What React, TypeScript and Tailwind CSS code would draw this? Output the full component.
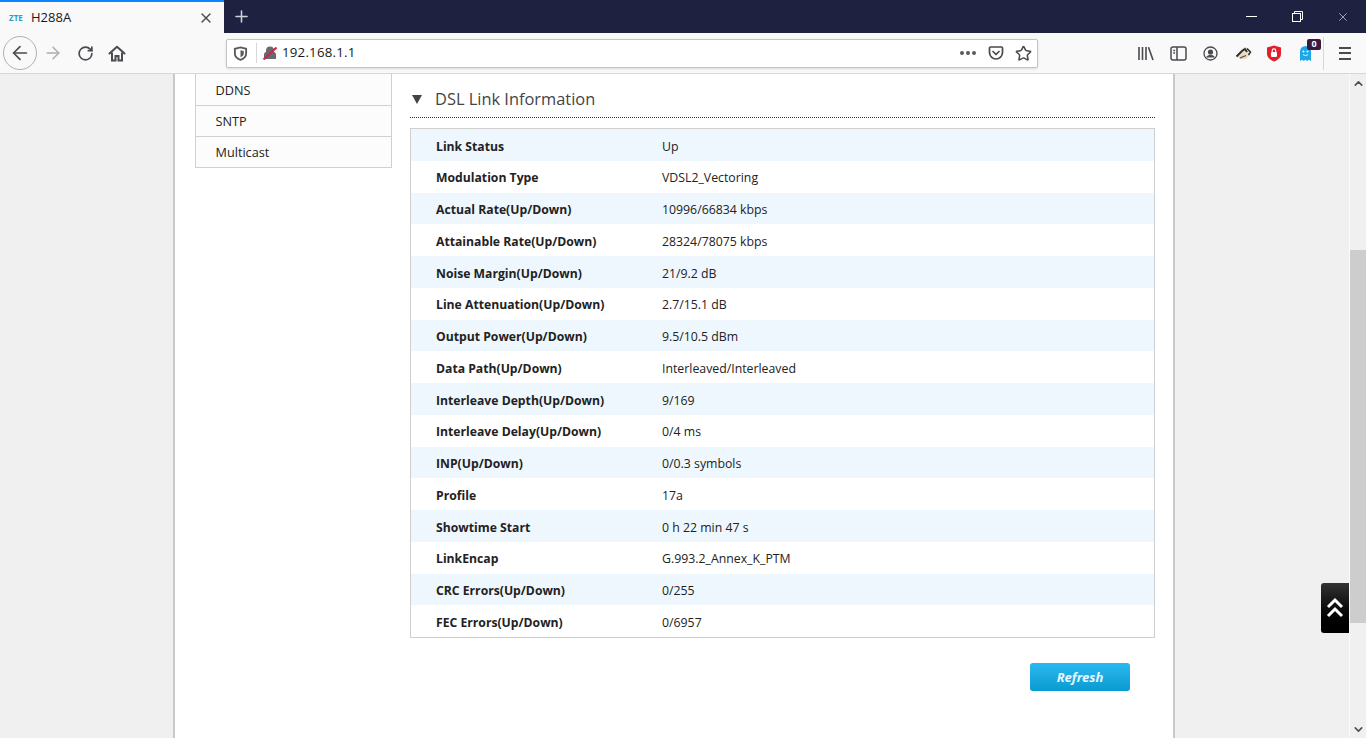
import * as React from "react";
import { ArrowLeft, ArrowRight, ChevronDown, ChevronUp, Plus, RotateCw, Star, X } from "lucide-react";

const rows: [string, string][] = [
  ["Link Status", "Up"],
  ["Modulation Type", "VDSL2_Vectoring"],
  ["Actual Rate(Up/Down)", "10996/66834 kbps"],
  ["Attainable Rate(Up/Down)", "28324/78075 kbps"],
  ["Noise Margin(Up/Down)", "21/9.2 dB"],
  ["Line Attenuation(Up/Down)", "2.7/15.1 dB"],
  ["Output Power(Up/Down)", "9.5/10.5 dBm"],
  ["Data Path(Up/Down)", "Interleaved/Interleaved"],
  ["Interleave Depth(Up/Down)", "9/169"],
  ["Interleave Delay(Up/Down)", "0/4 ms"],
  ["INP(Up/Down)", "0/0.3 symbols"],
  ["Profile", "17a"],
  ["Showtime Start", "0 h 22 min 47 s"],
  ["LinkEncap", "G.993.2_Annex_K_PTM"],
  ["CRC Errors(Up/Down)", "0/255"],
  ["FEC Errors(Up/Down)", "0/6957"],
];

const TabBar = () => (
  <div className="flex h-[33px] bg-[#1e2240] text-white">
    <div className="flex w-[224px] items-center border-t-2 border-[#0a84ff] bg-[#f9f9fa] pl-[9px] pr-[10px] text-[#18191a]">
      <span className="w-[22px] text-[8px] font-bold text-[#2a9fc9]">ZTE</span>
      <span className="flex-1 text-[13px]">H288A</span>
      <X size={16} strokeWidth={2} className="text-[#4a4a4f]" />
    </div>
    <div className="flex w-[34px] items-center justify-center">
      <Plus size={19} strokeWidth={2} className="text-[#d0d1d8]" />
    </div>
    <div className="flex-1" />
    <div className="flex items-center">
      <div className="flex w-[46px] justify-center">
        <div className="h-px w-[11px] bg-white" />
      </div>
      <div className="flex w-[46px] justify-center">
        <svg width="11" height="11" viewBox="0 0 11 11" fill="none" stroke="#fff" strokeWidth="1">
          <rect x="0.5" y="2.5" width="8" height="8" />
          <path d="M2.5 2.5v-2h8v8h-2" />
        </svg>
      </div>
      <div className="flex w-[46px] justify-center">
        <X size={14} strokeWidth={1} />
      </div>
    </div>
  </div>
);

const Toolbar = () => (
  <div className="flex h-[41px] items-center border-b border-[#d7d7db] bg-[#f9f9fa] text-[#4a4a4f]">
    <div className="ml-[3px] flex h-[34px] w-[34px] items-center justify-center rounded-full border border-[#b1b1b3]">
      <ArrowLeft size={22} strokeWidth={1.8} />
    </div>
    <ArrowRight size={20} strokeWidth={1.8} className="ml-[6px] text-[#adadb0]" />
    <RotateCw size={17} strokeWidth={2.4} className="ml-[14px]" />
    <svg width="18" height="17" viewBox="0 0 18 17" className="ml-[14px]" fill="none" stroke="#4a4a4f" strokeWidth="2">
      <path d="M1.500 8.500 9 1.800l7.500 6.700" strokeLinejoin="round" strokeLinecap="round" />
      <path d="M4 7.500V15.500h3.500V11h3v4.500H14V7.500" />
    </svg>
    <div className="ml-[100px] flex h-[29px] w-[812px] items-center rounded-[2px] border border-[#c4c4c6] bg-white shadow-sm">
      <svg width="15" height="15" viewBox="0 0 16 16" className="ml-[6px]" fill="none" stroke="#5b5b5f" strokeWidth="2">
        <path d="M8 1.500 14 3v5c0 3.500-2.600 5.600-6 6.700C4.600 13.600 2 11.500 2 8V3z" />
        <path d="M8 4.500 11.500 5.300V8c0 1.900-1.500 3.200-3.500 3.900z" fill="#5b5b5f" stroke="none" />
      </svg>
      <div className="ml-[8px] h-[20px] w-px bg-[#d7d7db]" />
      <svg width="16" height="16" viewBox="0 0 16 16" className="ml-[5px]">
        <path d="M2 14V9.500C2 8 3 7 4 7V5.500a4 4 0 0 1 8 0V7c1 0 2 1 2 2.500V14z" fill="#6a6a6e" />
        <path d="M1.500 14.500 14.500 2.500" stroke="#c8284f" strokeWidth="2.200" />
      </svg>
      <span className="ml-[4px] flex-1 text-[13.300px] tracking-[0.2px] text-[#18191a]">192.168.1.1</span>
      <div className="flex gap-[2px]">
        <div className="h-[4px] w-[4px] rounded-full bg-[#5b5b5f]" />
        <div className="h-[4px] w-[4px] rounded-full bg-[#5b5b5f]" />
        <div className="h-[4px] w-[4px] rounded-full bg-[#5b5b5f]" />
      </div>
      <svg width="16" height="16" viewBox="0 0 16 16" className="ml-[12px]" fill="none" stroke="#4a4a4f" strokeWidth="1.700">
        <path d="M2.500 2h11c.6 0 1 .4 1 1v4.500c0 3.600-3 6.500-6.500 6.500S1.500 11.100 1.500 7.500V3c0-.6.400-1 1-1z" />
        <path d="M5 6.500 8 9.500l3-3" strokeLinecap="round" strokeLinejoin="round" />
      </svg>
      <Star size={17} strokeWidth={2.2} className="ml-[11px] mr-[5px]" />
    </div>
    <div className="ml-[100px] flex items-center">
      <svg width="16" height="15" viewBox="0 0 16 15" fill="none" stroke="#4a4a4f" strokeWidth="1.600">
        <path d="M1 1v13M4.500 1v13M8 1v13M10.500 1.200 15 14" />
      </svg>
      <svg width="17" height="15" viewBox="0 0 17 15" className="ml-[16px]" fill="none" stroke="#4a4a4f" strokeWidth="1.500">
        <rect x="1" y="1" width="15" height="13" rx="2" />
        <path d="M7 1v13M3.300 4.500h1.800M3.300 7h1.800" />
      </svg>
      <svg width="15" height="15" viewBox="0 0 15 15" className="ml-[16px]" fill="none" stroke="#4a4a4f" strokeWidth="1.300">
        <circle cx="7.500" cy="7.500" r="6.500" />
        <circle cx="7.500" cy="6" r="2.600" fill="#4a4a4f" stroke="none" />
        <path d="M3 11.500c1-2 2.600-2.800 4.500-2.800s3.500.8 4.500 2.800z" fill="#4a4a4f" stroke="none" />
      </svg>
      <svg width="17" height="14" viewBox="0 0 17 14" className="ml-[17px]">
        <path d="M1 10 6 4l3-3 4 1 3 3-1 4-4 4H5z" fill="#e6dcc8" />
        <path d="M1.500 10.500 7 5l3-2 2 3" stroke="#2c2c2c" strokeWidth="1.800" fill="none" />
        <path d="M12 2.500 15.500 6l-2 3" stroke="#2c2c2c" strokeWidth="1.400" fill="none" />
        <path d="M5 12 11 9.500" stroke="#5b4a32" strokeWidth="1.300" />
      </svg>
      <svg width="16" height="17" viewBox="0 0 16 17" className="ml-[14px]">
        <path d="M8 .5 15 2.500V9c0 3.500-3.200 6-7 7.500C4.200 15 1 12.500 1 9V2.500z" fill="#e0202b" />
        <rect x="5" y="7" width="6" height="5" rx="1" fill="#fff" />
        <path d="M6.200 7V5.700a1.800 1.800 0 0 1 3.600 0V7" fill="none" stroke="#fff" strokeWidth="1.100" />
      </svg>
      <div className="relative ml-[17px] h-[17px] w-[13px]">
        <svg width="13" height="17" viewBox="0 0 13 17">
          <path d="M1 6.500a5.500 5.500 0 0 1 11 0V16l-2-1.300L8.200 16l-1.700-1.300L4.800 16 3 14.700 1 16z" fill="#1ea7e8" />
          <circle cx="4.500" cy="6.500" r="1" fill="#fff" />
          <circle cx="8.500" cy="6.500" r="1" fill="#fff" />
          <path d="M4 9.500c1.500 1.300 3.500 1.300 5 0" fill="none" stroke="#fff" strokeWidth="0.900" />
        </svg>
        <span className="absolute left-[8px] top-[-6px] flex h-[11px] w-[14px] items-center justify-center rounded-[2px] bg-[#3a1a3f] text-[9px] font-bold text-white">0</span>
      </div>
      <div className="ml-[11px] h-[33px] w-px bg-[#d7d7db]" />
      <div className="ml-[15px] flex flex-col gap-[3.500px]">
        <div className="h-[2px] w-[12px] bg-[#4a4a4f]" />
        <div className="h-[2px] w-[12px] bg-[#4a4a4f]" />
        <div className="h-[2px] w-[12px] bg-[#4a4a4f]" />
      </div>
    </div>
  </div>
);

const Sidebar = () => (
  <div className="w-[197px] shrink-0 border-x border-b border-[#d0d0d0] bg-[#fcfcfc] text-[12.700px] text-[#222]">
    <div className="flex h-[32px] items-center border-b border-[#d0d0d0] pl-[19.500px] pt-[3px]">DDNS</div>
    <div className="flex h-[31px] items-center border-b border-[#d0d0d0] pl-[19.500px] pt-[2px]">SNTP</div>
    <div className="flex h-[30px] items-center pl-[19.500px] pt-[2px]">Multicast</div>
  </div>
);

const Content = () => (
  <div className="ml-[18px] w-[745px]">
    <div className="flex h-[44px] items-center border-b border-dotted border-[#333] pl-[2px] pt-[7px]">
      <div className="h-0 w-0 border-x-[5.500px] border-t-[9px] border-x-transparent border-t-[#444]" />
      <span className="ml-[13px] text-[16.400px] text-[#444]">DSL Link Information</span>
    </div>
    <div className="mt-[10px] border border-[#cfcfcf]">
      {rows.map(([label, value], i) => (
        <div key={label} className={`flex h-[31.750px] items-center pl-[25px] pt-[4px] text-[12.300px] text-[#222] ${i % 2 === 0 ? "bg-[#eef7fd]" : "bg-white"}`}>
          <span className="w-[226px] text-[12.200px] font-bold">{label}</span>
          <span>{value}</span>
        </div>
      ))}
    </div>
    <div className="mt-[25px] flex justify-end pr-[25px]">
      <button className="h-[28px] w-[100px] rounded-[3px] bg-gradient-to-b from-[#2ab9ee] to-[#059bd1] pt-[1px] text-[13px] font-bold italic text-[#e8f8ff]">Refresh</button>
    </div>
  </div>
);

export default function App() {
  return (
    <div className="relative flex h-[738px] w-[1366px] flex-col overflow-hidden bg-[#f0f0f0] font-['Open_Sans','Noto_Sans',sans-serif]">
      <TabBar />
      <Toolbar />
      <div className="flex flex-1 overflow-hidden">
        <div className="flex flex-1 justify-start pl-[173px]">
          <div className="flex w-[1002px] items-start border-x-2 border-[#c9c9c9] bg-white pl-[20px]">
            <Sidebar />
            <Content />
          </div>
        </div>
        <div className="flex w-[17px] shrink-0 flex-col items-center justify-between border-l border-[#fafafa] bg-[#f0f0f0] text-[#505050]">
          <ChevronUp size={13} strokeWidth={3} className="mt-[3px]" />
          <ChevronDown size={13} strokeWidth={3} className="mb-[2px]" />
        </div>
      </div>
      <div className="absolute right-0 top-[250px] h-[373px] w-[16px] bg-[#cdcdcd]" />
      <div className="absolute left-[1321px] top-[583px] flex h-[50px] w-[28px] items-center justify-center rounded-l-[3px] bg-gradient-to-b from-[#333] to-black">
        <svg width="18" height="22" viewBox="0 0 18 22" fill="none" stroke="#fff" strokeWidth="3">
          <path d="M2 10 9 3l7 7M2 19l7-7 7 7" />
        </svg>
      </div>
    </div>
  );
}
